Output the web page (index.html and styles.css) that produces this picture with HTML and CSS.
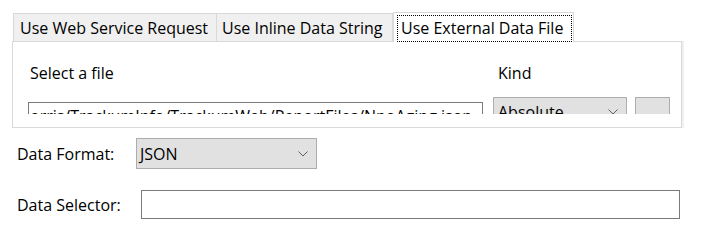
FILE: index.html
```html
<!DOCTYPE html>
<html lang="en">
<head>
    <meta charset="UTF-8">
    <title>Data Source</title>
    <link rel="stylesheet" href="styles.css">
</head>
<body>

    <!-- Source tabs -->
    <div class="tabs">
        <div class="tab tab-first">Use Web Service Request</div>
        <div class="tab tab-second">Use Inline Data String</div>
        <div class="tab tab-selected"><span class="focus">Use External Data File</span></div>
    </div>

    <div class="panel">
        <div class="panel-inner">
            <div class="label file-label">Select a file</div>
            <div class="label kind-label">Kind</div>
            <div></div>
            <div class="textbox file-box">orris/TrackumInfo/TrackumWeb/ReportFiles/NpoAging.json</div>
            <div class="combo kind-combo">
                <span>Absolute</span>
                <svg class="chevron" width="10" height="6" viewBox="0 0 10 6"><path d="M0.5 0.5 L5 5 L9.5 0.5" fill="none" stroke="#606060" stroke-width="1"/></svg>
            </div>
            <div class="browse"></div>
        </div>
    </div>

    <div class="row format-row">
        <div class="row-label format-label">Data Format:</div>
        <div class="combo format-combo">
            <span>JSON</span>
            <svg class="chevron" width="10" height="6" viewBox="0 0 10 6"><path d="M0.5 0.5 L5 5 L9.5 0.5" fill="none" stroke="#606060" stroke-width="1"/></svg>
        </div>
    </div>

    <div class="row selector-row">
        <div class="row-label selector-label">Data Selector:</div>
        <div class="textbox selector-box"></div>
    </div>

</body>
</html>
```

FILE: styles.css
```css
body {
    margin: 0;
    font-family: "Open Sans", "Noto Sans", sans-serif;
    font-size: 16px;
    color: #000;
    background: #fff;
}

/* tab strip */
.tabs {
    display: flex;
    align-items: flex-end;
    padding: 12px 0 0 13px;
}
.tab {
    box-sizing: border-box;
    height: 28px;
    line-height: 28px;
    background: #f0f0f0;
    border: 1px solid #d9d9d9;
    border-bottom: none;
    white-space: nowrap;
    overflow: hidden;
}
.tab-first {
    width: 204px;
    padding-left: 6px;
}
.tab-second {
    width: 176px;
    border-left: none;
    padding-left: 5px;
}
.tab-selected {
    width: 181px;
    height: 30px;
    margin-bottom: -1px;
    background: #fff;
    padding: 2px 0 0 3px;
    position: relative;
    z-index: 1;
}
.focus {
    display: inline-block;
    box-sizing: border-box;
    width: 175px;
    height: 27px;
    line-height: 24px;
    padding-left: 3px;
    border: 1px dotted #000;
    overflow: hidden;
}

/* panel */
.panel {
    box-sizing: border-box;
    width: 670px;
    height: 87px;
    margin-left: 12px;
    border: 1px solid #d9d9d9;
    box-shadow: 2px 0 0 #f0f0f0;
}
.panel-inner {
    display: grid;
    grid-template-columns: 465px 142px 35px;
    grid-template-rows: 20px auto;
    height: 72px;
    overflow: hidden;
    padding: 21px 0 0 15px;
    box-sizing: border-box;
}
.label {
    line-height: 20px;
}
.file-label {
    padding-left: 2px;
}
.kind-label {
    padding-left: 5px;
}
.textbox {
    box-sizing: border-box;
    border: 1px solid #7a7a7a;
    background: #fff;
}
.file-box {
    width: 455px;
    height: 25px;
    margin-top: 19px;
    padding-left: 1px;
    line-height: 26px;
    white-space: nowrap;
    overflow: hidden;
    color: #000;
}
.combo {
    box-sizing: border-box;
    display: flex;
    align-items: center;
    justify-content: space-between;
    background: #e1e1e1;
    border: 1px solid #adadad;
}
.kind-combo {
    width: 134px;
    height: 30px;
    margin-top: 14px;
    padding: 0 8px 0 4px;
}
.browse {
    box-sizing: border-box;
    width: 35px;
    height: 30px;
    margin-top: 14px;
    background: #e1e1e1;
    border: 1px solid #adadad;
}
.chevron {
    display: block;
}

/* lower form rows */
.row {
    display: flex;
    align-items: center;
    padding-left: 17px;
}
.format-row {
    margin-top: 10px;
}
.selector-row {
    margin-top: 21px;
}
.format-label {
    width: 119px;
}
.selector-label {
    width: 124px;
}
.format-combo {
    width: 181px;
    height: 31px;
    padding: 0 8px 0 3px;
}
.selector-box {
    width: 539px;
    height: 29px;
}
```
